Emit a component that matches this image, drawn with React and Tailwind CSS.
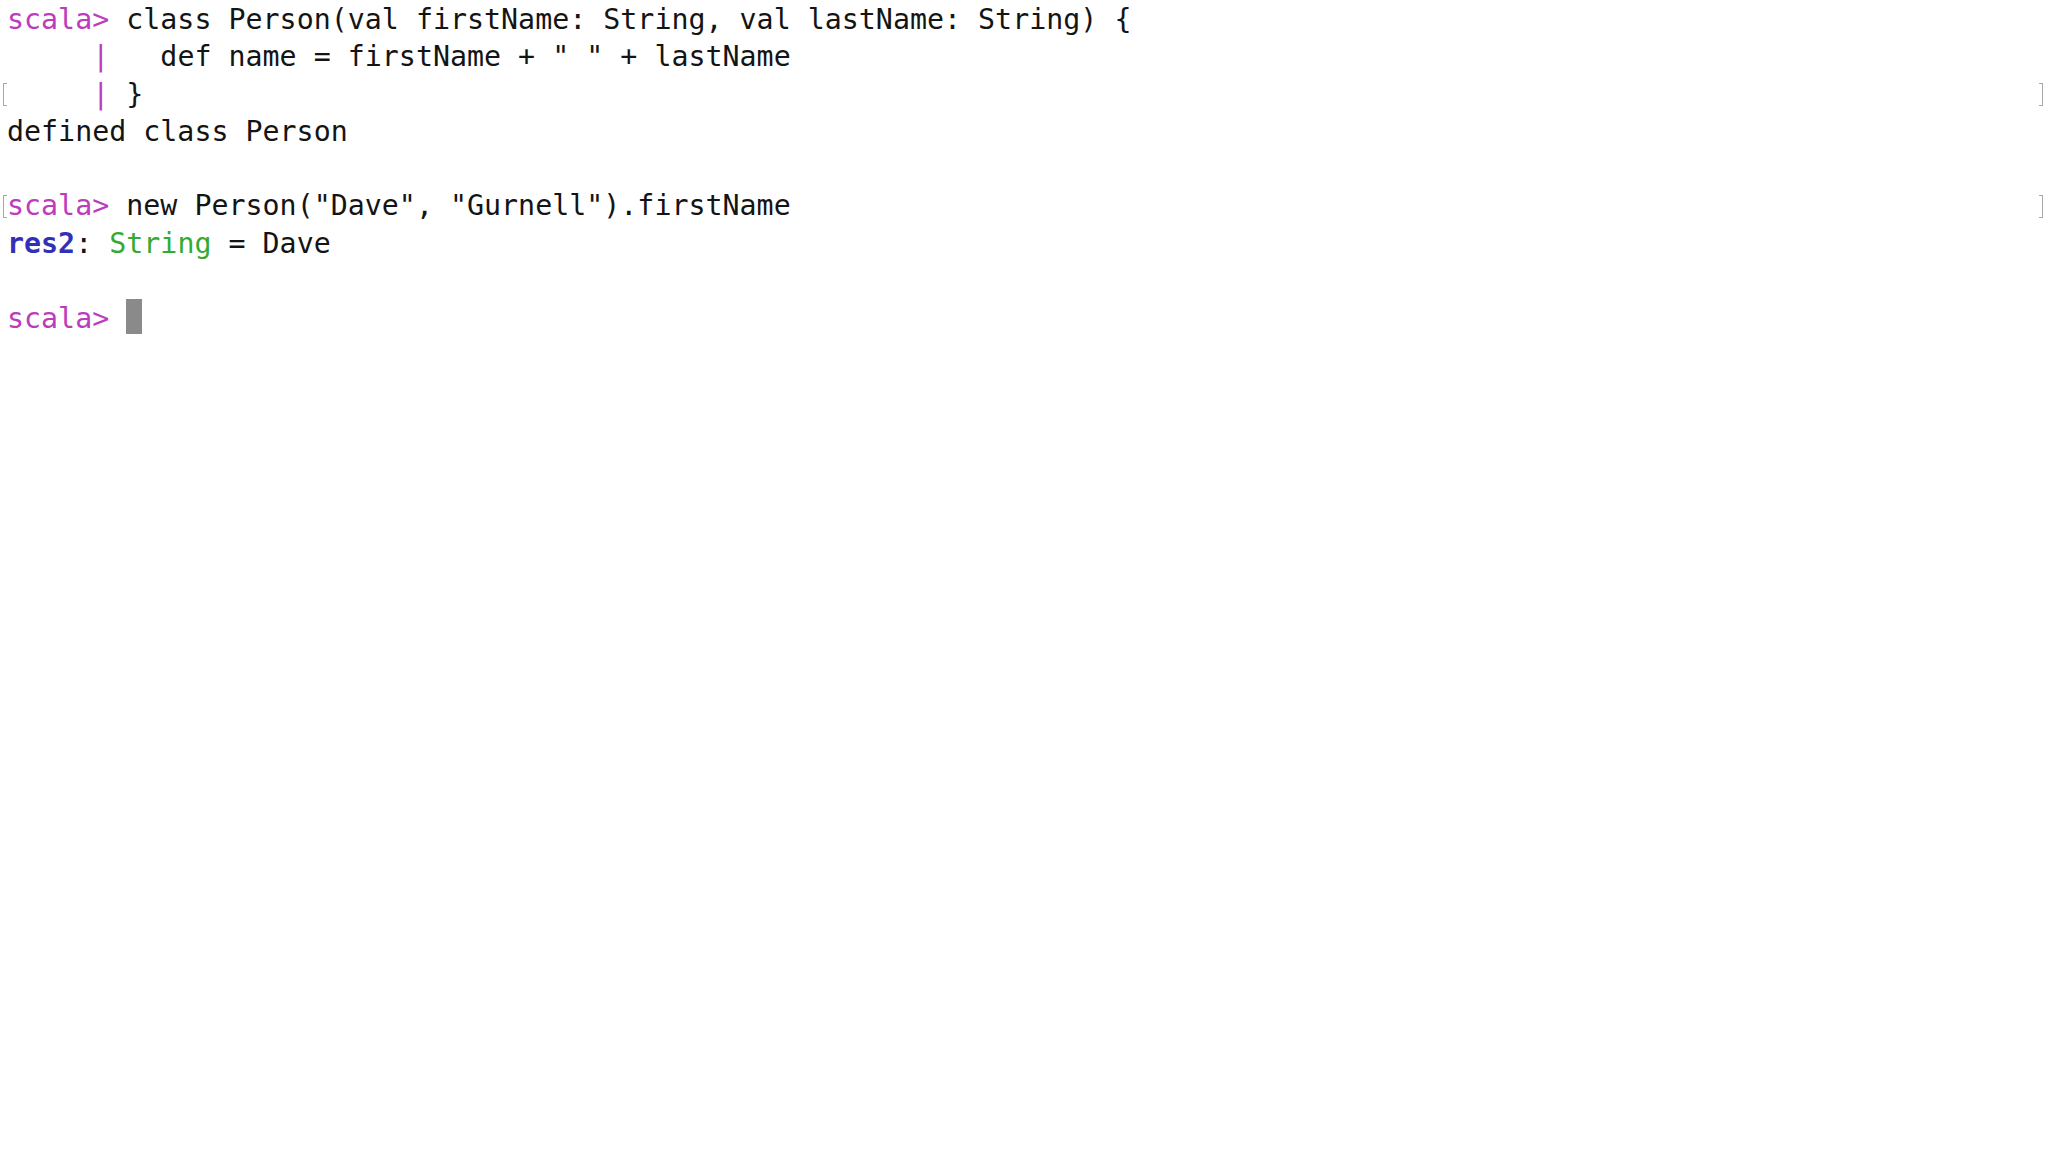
import React from "react";

const Prompt = () => <span className="text-[#bd3bbd]">scala&gt; </span>;
const Pipe = () => <span className="text-[#bd3bbd]">|</span>;

function Mark({ side }) {
  return (
    <span
      className={
        side === "left"
          ? "self-center h-[23px] w-[4px] border-l border-t border-b border-[#a8a8a8]"
          : "self-center h-[23px] w-[4px] border-r border-t border-b border-[#a8a8a8]"
      }
    />
  );
}

function Line({ marked, children }) {
  return (
    <div className="flex items-stretch h-[37.3px]">
      <div className="w-[7px] pl-[3px] flex">{marked && <Mark side="left" />}</div>
      <div className="flex-1 whitespace-pre">{children}</div>
      <div className="w-[9px] flex justify-end pr-[5px]">{marked && <Mark side="right" />}</div>
    </div>
  );
}

export default function App() {
  return (
    <div className="min-h-screen w-full bg-white pt-[1px] text-[#141414] font-['DejaVu_Sans_Mono','Liberation_Mono',monospace] text-[28.3px] leading-[37.3px]">
      <Line>
        <Prompt />
        class Person(val firstName: String, val lastName: String) {"{"}
      </Line>
      <Line>
        {"     "}
        <Pipe />
        {"   def name = firstName + \" \" + lastName"}
      </Line>
      <Line marked>
        {"     "}
        <Pipe />
        {" }"}
      </Line>
      <Line>defined class Person</Line>
      <Line> </Line>
      <Line marked>
        <Prompt />
        new Person("Dave", "Gurnell").firstName
      </Line>
      <Line>
        <span className="text-[#3131b8] font-semibold">res2</span>
        {": "}
        <span className="text-[#33ab33]">String</span>
        {" = Dave"}
      </Line>
      <Line> </Line>
      <Line>
        <Prompt />
        <span className="inline-block align-[-6px] w-[16px] h-[35px] bg-[#8a8a8a]" />
      </Line>
    </div>
  );
}
